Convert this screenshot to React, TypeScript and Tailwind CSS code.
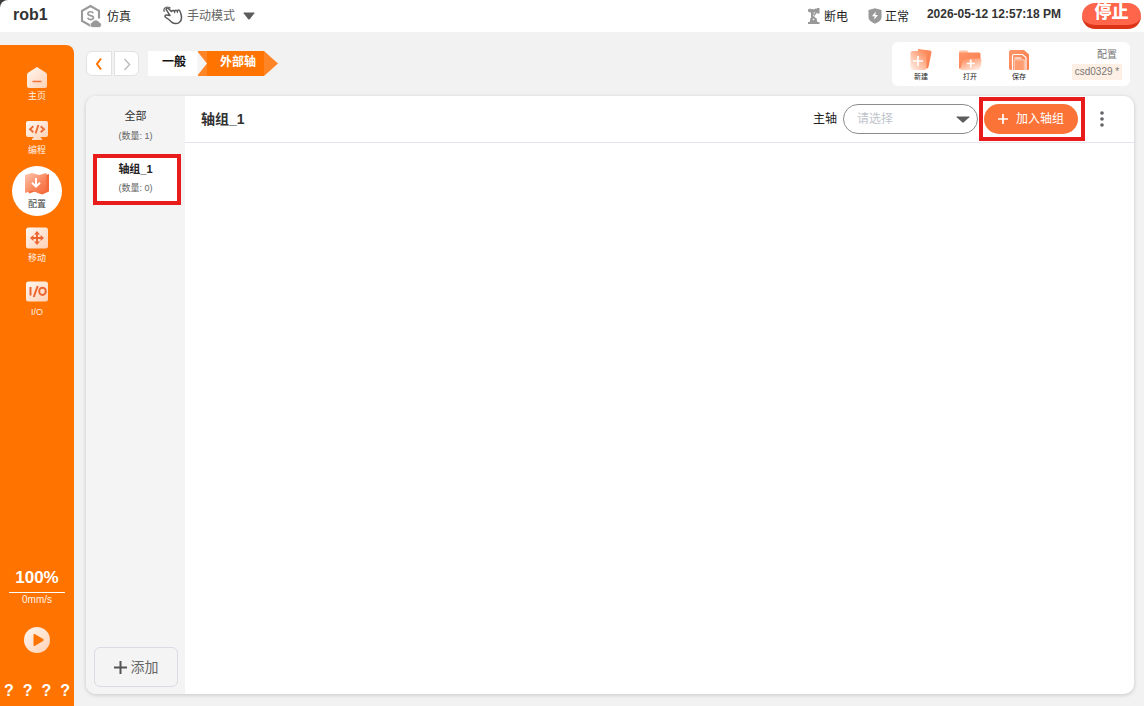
import React, { useState } from "react";

const fontStack =
  "font-['Liberation_Sans','Noto_Sans_CJK_SC',sans-serif]";

function SimIcon() {
  return (
    <svg width="22" height="24" viewBox="0 0 22 24" fill="none" aria-hidden="true">
      <path d="M19 14.500V6.800L10.500 2 2 6.800v10L10.500 21.700l1.500-.8" stroke="#999" strokeWidth="2.100" />
      <path d="M13.300 9.300c-.4-1-1.400-1.500-2.700-1.500-1.600 0-2.700.7-2.700 1.900 0 2.700 5.500 1.100 5.500 3.900 0 1.200-1.200 2-2.800 2s-2.600-.7-3-1.800" stroke="#999" strokeWidth="1.600" />
      <path d="M12.500 23.500a2.700 2.700 0 0 1-.3-5.300 4 4 0 0 1 7.200 0 2.700 2.700 0 0 1-.2 5.300z" fill="#999" stroke="#fff" strokeWidth=".7" />
    </svg>
  );
}

function HandIcon() {
  return (
    <svg width="20" height="20" viewBox="0 0 20 20" fill="none" stroke="#5a5a5a" strokeWidth="1.500" strokeLinecap="round" strokeLinejoin="round" aria-hidden="true">
      <path d="M8.600 5.600 5.300 2.500C3.900 1.300 2.500 2.900 3.600 4.200L7 9.600l-3.400-.5c-1.900-.2-2.200 1.800-.6 2.500 2.300 1 3.600 2.400 5.200 4.200 2 2.200 6 2.400 8.300.4 2.300-2 2.300-4.600 1.700-7-.5-2.100-.9-4-1.700-4.700-.9-.8-2.100-.3-2.100.8-.5-1.400-2.600-1.400-2.800.1-.7-1.300-2.900-1.100-3 .2z" />
      <path d="M1.200 5.500C.2 3 2 .9 4.400 1c1.100 0 2 .4 2.600 1" strokeWidth="1.200" />
      <path d="M11.600 5.400v1.300M14.400 5.300v1.200" strokeWidth="1.200" />
    </svg>
  );
}

function RobotIcon() {
  return (
    <svg width="14" height="18" viewBox="0 0 14 18" fill="#999" aria-hidden="true">
      <path d="M1 2.500 3.500 1.200v4.600L1 4.600z" />
      <path d="M3 2.500h5v2.200H3zM10 1h2.500v5.500H10z" />
      <circle cx="9" cy="3.700" r="2.200" />
      <circle cx="5" cy="4" r="2" />
      <path d="M4 4.500h2.600L7 9l2 2.500H4zM8.500 5 6 8.500l1 1L10 5.500z" />
      <path d="M3.500 11h6l.8 4H2.700zM1 15h11.500v2H1z" />
      <circle cx="6.500" cy="12.500" r=".8" fill="#fff" />
    </svg>
  );
}

function ShieldIcon() {
  return (
    <svg width="14" height="16" viewBox="0 0 14 16" aria-hidden="true">
      <path d="M7 .3 13.500 2v7c0 3.200-3 5.200-6.500 6.700C3.500 14.200.5 12.200.5 9V2z" fill="#999" />
      <path d="M7.800 3.500 4 8.300h2.600L6.200 11.800l3.800-4.800H7.400z" fill="#fff" />
    </svg>
  );
}

function Gradients() {
  return (
    <svg width="0" height="0" className="absolute" aria-hidden="true">
      <defs>
        <linearGradient id="cream" x1="0" y1="0" x2="1" y2="1">
          <stop offset="0" stopColor="#fff8f3" />
          <stop offset="1" stopColor="#ffd0b2" />
        </linearGradient>
        <linearGradient id="coral" x1="0" y1="0" x2="1" y2="1">
          <stop offset="0" stopColor="#ff966a" />
          <stop offset="1" stopColor="#f97a48" />
        </linearGradient>
        <linearGradient id="map" x1="0" y1="0" x2="1" y2="1">
          <stop offset="0" stopColor="#fcc5af" />
          <stop offset=".6" stopColor="#f9865c" />
          <stop offset="1" stopColor="#f6693a" />
        </linearGradient>
        <linearGradient id="glass" x1=".2" y1="0" x2=".8" y2="1">
          <stop offset="0" stopColor="#ff8d5e" />
          <stop offset="1" stopColor="#fff0e8" />
        </linearGradient>
        <linearGradient id="sheet" x1="1" y1="0" x2="0" y2="1">
          <stop offset="0" stopColor="#ff8552" />
          <stop offset="1" stopColor="#fff3ed" />
        </linearGradient>
      </defs>
    </svg>
  );
}

function HomeIcon() {
  return (
    <svg width="24" height="24" viewBox="0 0 24 24" aria-hidden="true">
      <path d="M12 3 21 8.700q1 .8 1 2V22q0 2-2 2H4q-2 0-2-2V10.700q0-1.200 1-2z" fill="url(#cream)" />
      <path d="M7.500 17.500h9" stroke="#f4733c" strokeWidth="1.500" />
    </svg>
  );
}

function CodeIcon() {
  return (
    <svg width="24" height="24" viewBox="0 0 24 24" aria-hidden="true">
      <path d="M3 3h18q2 0 2 2v12q0 2-2 2h-5.500l.5 1.500h1V22H7v-1.500h1L8.500 19H3q-2 0-2-2V5q0-2 2-2z" fill="url(#cream)" />
      <path d="M8.300 8.300 5 11.300l3.300 3M15.700 8.300 19 11.300l-3.300 3M13.400 7l-2.800 8.500" fill="none" stroke="#ed6d35" strokeWidth="1.900" />
    </svg>
  );
}

function MapIcon() {
  return (
    <svg width="26" height="24" viewBox="0 0 26 24" aria-hidden="true">
      <path d="M20 3.500 25 2v17.500l-7 3-7-3-6 2-1-3z" fill="#f36a38" />
      <path d="M1 3 8 1l7 2 7.500-2v17.500l-7.500 3-7-3L1 21z" fill="url(#map)" />
      <path d="M12 6v8.500M8 10.800l4 3.800 4-3.800" fill="none" stroke="#fff" strokeWidth="2" />
    </svg>
  );
}

function MoveIcon() {
  return (
    <svg width="24" height="24" viewBox="0 0 24 24" aria-hidden="true">
      <rect x="1" y="1.500" width="22" height="21" rx="2.500" fill="url(#cream)" />
      <path d="M12 7v10M7 12h10" stroke="#ed6530" strokeWidth="1.900" />
      <path d="m12 5 3 3.400H9zM12 19l3-3.400H9zM5 12l3.400-3v6zM19 12l-3.400-3v6z" fill="#ed6530" />
    </svg>
  );
}

function IoIcon() {
  return (
    <svg width="24" height="24" viewBox="0 0 24 24" aria-hidden="true">
      <rect x="1" y="1.500" width="22" height="20" rx="2.500" fill="url(#cream)" />
      <path d="M5.500 7v8.500M12.700 6 8.700 17" stroke="#ed6530" strokeWidth="2" />
      <ellipse cx="17.500" cy="11.300" rx="3.300" ry="3.600" fill="none" stroke="#ed6530" strokeWidth="2" />
    </svg>
  );
}

function NewIcon() {
  return (
    <svg width="24" height="24" viewBox="0 0 24 24" aria-hidden="true">
      <path d="M9 1 21 2.500q1.800.3 1.500 2L19.500 19q-.3 1.500-2 1.500H9z" fill="url(#coral)" />
      <rect x="1.500" y="3" width="16" height="19" rx="2" fill="url(#sheet)" />
      <path d="M9 8v10M4 13h10" stroke="#fff" strokeWidth="1.700" />
    </svg>
  );
}

function OpenIcon() {
  return (
    <svg width="24" height="24" viewBox="0 0 24 24" aria-hidden="true">
      <path d="M1 4q0-1.500 1.500-1.500H9L11 5H1z" fill="#ffc4a8" />
      <path d="M1 4.500h20q1.500 0 1.500 1.500v12L3 20.500H1z" fill="url(#coral)" />
      <path d="M6 10.500h16q2 0 1.600 2l-1.600 8q-.4 1.800-2.500 1.800H4.500q-2.300 0-2-1.800l2-8q.5-2 1.500-2z" fill="url(#glass)" />
      <path d="M12.700 11.500v8M8.700 15.500h8" stroke="#fff" strokeWidth="1.700" />
    </svg>
  );
}

function SaveIcon() {
  return (
    <svg width="24" height="24" viewBox="0 0 24 24" aria-hidden="true">
      <path d="M4 2h13l5 4.500V20.500q0 1.500-1.500 1.500H4q-2 0-2-2V4q0-2 2-2z" fill="url(#coral)" />
      <path d="M5.500 22V8q0-1.500 1.500-1.500h8.500l3.500 3V22" fill="none" stroke="#fff" strokeWidth="1.200" />
      <path d="M7.500 10h7" stroke="#fff" strokeWidth="1.200" />
      <rect x="7.500" y="12" width="9.500" height="10" fill="#ff9c72" />
      <path d="M7.300 22V11.800h10V22" fill="none" stroke="#ffe3d5" strokeWidth=".8" />
    </svg>
  );
}

function Triangle({ w, h, className = "" }: { w: number; h: number; className?: string }) {
  return (
    <svg width={w} height={h} viewBox="0 0 12 8" preserveAspectRatio="none" className={className} aria-hidden="true">
      <path d="M1 .5h10q.8 0 .4.8L6.700 7.200q-.7.8-1.400 0L.6 1.300Q.2.500 1 .5z" fill="#5c5c5c" />
    </svg>
  );
}

function Chevron({ flip, color }: { flip?: boolean; color: string }) {
  return (
    <svg width="8" height="14" viewBox="0 0 8 14" fill="none" aria-hidden="true">
      <path d={flip ? "M1.500 2 6.500 7.500l-5 5.500" : "M6 1.500 2 7l4 5.500"} stroke={color} strokeWidth={flip ? 1.500 : 2} />
    </svg>
  );
}

const navItems = [
  { label: "主页", icon: <HomeIcon /> },
  { label: "编程", icon: <CodeIcon /> },
  { label: "配置", icon: <MapIcon /> },
  { label: "移动", icon: <MoveIcon /> },
  { label: "I/O", icon: <IoIcon /> },
];

const fileActions = [
  { label: "新建", icon: <NewIcon /> },
  { label: "打开", icon: <OpenIcon /> },
  { label: "保存", icon: <SaveIcon /> },
];

function Header() {
  return (
    <div className="bg-[#3c3c3c]">
      <header className="flex h-8 items-center rounded-tl-lg bg-white pl-[13px] text-xs text-[#1f1f1f]">
        <h1 className="w-[67px] pb-[2px] text-base leading-5 font-bold text-[#333]">rob1</h1>
        <div className="flex items-center gap-[5px]">
          <SimIcon />
          <span className="pt-px">仿真</span>
        </div>
        <button className="ml-8 flex items-center gap-1 text-[#666]">
          <HandIcon />
          <span>手动模式</span>
          <Triangle w={12} h={8} className="ml-1" />
        </button>
        <div className="ml-auto flex items-center gap-[3px]">
          <RobotIcon />
          <span className="pt-px">断电</span>
        </div>
        <div className="ml-5 flex items-center gap-[3px]">
          <ShieldIcon />
          <span className="pt-px">正常</span>
        </div>
        <time className="ml-[18px] pb-1 font-bold text-[#333]">2026-05-12 12:57:18 PM</time>
        <button className="mr-[3px] ml-[21px] flex h-[26px] w-[59px] justify-center rounded-[13px] border-b-4 border-[#dc3419] bg-[#fe654b] text-[17px] leading-[20px] font-black text-white">
          停止
        </button>
      </header>
    </div>
  );
}

function SideNav() {
  return (
    <aside className="mt-[13px] flex w-[74px] shrink-0 flex-col items-center rounded-tr-lg bg-[#ff7400] pt-[13px] text-white">
      <nav className="flex flex-col gap-1">
        {navItems.map((item) => {
          const active = item.label === "配置";
          return (
            <a
              key={item.label}
              href="#"
              aria-current={active ? "page" : undefined}
              className={`flex size-[50px] flex-col items-center gap-[2px] rounded-full pt-[6px] text-[9px] leading-3 ${active ? "bg-white text-[#444]" : "text-[#fff1e6]"}`}
            >
              {item.icon}
              <span>{item.label}</span>
            </a>
          );
        })}
      </nav>
      <div className="mt-auto w-14 text-center">
        <div className="border-b border-white pb-1 text-[17px] leading-5 font-bold">100%</div>
        <div className="text-[10px] leading-[14px] text-[#fff1e6]">0mm/s</div>
      </div>
      <button aria-label="运行" className="mt-5">
        <svg width="26" height="26" viewBox="0 0 26 26">
          <circle cx="13" cy="13" r="13" fill="url(#cream)" />
          <path d="M9.500 8.200q0-1.800 1.600-.9l8 4.600q1.500 1.100 0 2.200l-8 4.600q-1.600.9-1.600-.9z" fill="#ff7400" />
        </svg>
      </button>
      <div className="mt-[26px] mb-[3px] flex w-full justify-between px-1 text-base leading-6 font-bold">
        <span>?</span>
        <span>?</span>
        <span>?</span>
        <span>?</span>
      </div>
    </aside>
  );
}

function TopBar() {
  return (
    <div className="flex h-16 pt-[10px] pr-1">
      <div className="mt-[9px] flex h-[25px] gap-[2px]">
        <button aria-label="后退" className="flex w-[26px] items-center justify-center rounded-l-md border border-[#e2e2e2] bg-white">
          <Chevron color="#ff7400" />
        </button>
        <button aria-label="前进" className="flex w-[25px] items-center justify-center rounded-r-md border border-[#e2e2e2] bg-white">
          <Chevron flip color="#bdbdbd" />
        </button>
      </div>
      <nav className="mt-[9px] ml-[9px] flex h-[25px] text-xs leading-[23px] font-bold">
        <a href="#" className="z-10 w-[59px] bg-[linear-gradient(90deg,#fff_49px,#f4f4f4_50px)] pl-[14px] text-[#111] [clip-path:polygon(0_0,49px_0,100%_50%,49px_100%,0_100%)]">
          一般
        </a>
        <a href="#" className="-ml-[9px] w-[80px] bg-[linear-gradient(90deg,#ff8426_9px,#ff7400_9px,#ff7400_66px,#ff8426_66px)] pl-[22px] text-white [clip-path:polygon(0_0,66px_0,100%_50%,66px_100%,0_100%)]">
          外部轴
        </a>
      </nav>
      <div className="ml-auto flex h-11 rounded-md bg-white pt-[6px] pr-2 pl-[9px]">
        <div className="flex gap-[9px]">
          {fileActions.map((a) => (
            <button key={a.label} className="flex w-10 flex-col items-center text-[7px] leading-[10px] text-[#222]">
              {a.icon}
              <span>{a.label}</span>
            </button>
          ))}
        </div>
        <div className="ml-[33px] flex w-[50px] flex-col items-center gap-[3px] text-[10px] leading-[13px] text-[#777]">
          <span className="w-10 text-right">配置</span>
          <span className="w-full bg-[#feefe4] text-center leading-4">csd0329 *</span>
        </div>
      </div>
    </div>
  );
}

function GroupList() {
  return (
    <div className="flex w-[99px] shrink-0 flex-col rounded-l-[10px] bg-[#f4f4f4] px-2 pt-[10px] pb-[7px] text-center">
      <button className="text-[#333]">
        <span className="block text-[11px] leading-5">全部</span>
        <span className="block text-[9px] leading-5 text-[#666]">(数量: 1)</span>
      </button>
      <button className="mt-2 -mr-[4px] -ml-px flex h-[51px] flex-col items-center border-4 border-[#e91c1c] bg-white pr-[3px] text-[#222]">
        <span className="text-[11px] leading-[22px] font-bold">轴组_1</span>
        <span className="text-[9px] leading-4 text-[#666]">(数量: 0)</span>
      </button>
      <button className="mt-auto -mr-px flex h-10 items-center justify-center gap-1 rounded-md border border-[#dadbe4] text-sm text-[#666]">
        <svg width="13" height="13" viewBox="0 0 13 13" aria-hidden="true">
          <path d="M6.500 0v13M0 6.500h13" stroke="#555" strokeWidth="2" />
        </svg>
        添加
      </button>
    </div>
  );
}

function GroupPanel() {
  const [axis, setAxis] = useState("");
  return (
    <section className="min-w-0 flex-1">
      <div className="flex h-[47px] items-center border-b border-[#e4e4ec] pl-4">
        <h2 className="text-sm font-bold text-[#333]">轴组_1</h2>
        <label htmlFor="main-axis" className="ml-auto text-xs text-[#222]">
          主轴
        </label>
        <div className="relative ml-[6px] flex items-center">
          <select
            id="main-axis"
            value={axis}
            onChange={(e) => setAxis(e.target.value)}
            className="h-[30px] w-[135px] appearance-none rounded-full border border-[#8c8c8c] bg-white pl-[13px] text-xs text-[#c0c4cc]"
          >
            <option value="">请选择</option>
          </select>
          <Triangle w={14} h={7} className="pointer-events-none absolute right-2" />
        </div>
        <div className="ml-px flex h-11 w-[106px] items-center border-4 border-[#e91c1c] pl-px">
          <button className="flex h-[30px] w-[94px] items-center justify-center gap-2 rounded-full bg-[#fb7336] text-xs text-white">
            <svg width="10" height="10" viewBox="0 0 10 10" aria-hidden="true">
              <path d="M5 0v10M0 5h10" stroke="#fff" strokeWidth="1.700" />
            </svg>
            加入轴组
          </button>
        </div>
        <button aria-label="更多" className="mr-[22px] ml-[6px] flex w-[21px] justify-center">
          <svg width="4" height="16" viewBox="0 0 4 16" fill="#606266">
            <circle cx="2" cy="2" r="1.800" />
            <circle cx="2" cy="8" r="1.800" />
            <circle cx="2" cy="14" r="1.800" />
          </svg>
        </button>
      </div>
    </section>
  );
}

export default function App() {
  return (
    <div className={`flex min-h-screen flex-col bg-[#f2f2f2] ${fontStack}`}>
      <Gradients />
      <Header />
      <div className="flex flex-1">
        <SideNav />
        <main className="flex min-w-0 flex-1 flex-col pr-[10px] pb-3 pl-3">
          <TopBar />
          <div className="flex flex-1 rounded-[10px] bg-white shadow-[0_1px_4px_rgba(0,0,0,0.18)]">
            <GroupList />
            <GroupPanel />
          </div>
        </main>
      </div>
    </div>
  );
}
